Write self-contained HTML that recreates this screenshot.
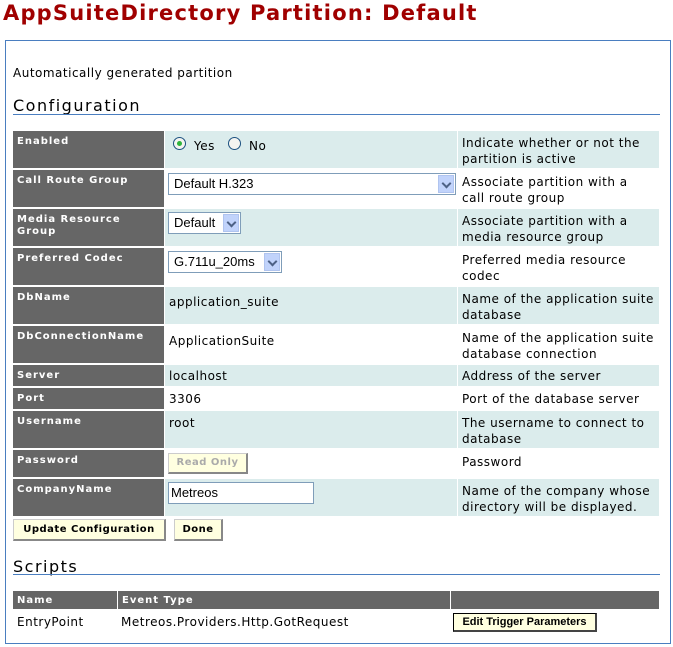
<!DOCTYPE html>
<html><head><meta charset="utf-8"><style>
*{margin:0;padding:0;box-sizing:border-box}
body{width:673px;height:647px;background:#fff;position:relative;overflow:hidden;font-family:"DejaVu Sans",Verdana,sans-serif;font-size:12px;letter-spacing:0.5px;color:#000}
.a{position:absolute}
h1{position:absolute;left:3px;top:1px;font-size:21px;font-weight:bold;color:#a00000;letter-spacing:1.2px;font-family:"DejaVu Sans",sans-serif;white-space:nowrap}
.box{left:5px;top:40px;width:666px;height:604px;border:1px solid #4a7ec0}
.h2{font-size:16px;letter-spacing:1.5px;left:13px}
.ul{left:13px;width:647px;height:1px;background:#4a7ec0}
.lab{left:13px;width:151px;background:#666;color:#fff;font-weight:bold;font-size:10px;letter-spacing:1px;padding:5px 4px;line-height:12px}
.val{left:165px;width:292px;padding:7px 4px;line-height:16px}
.desc{left:458px;width:201px;padding:4px 4px;line-height:16px}
.t{background:#dbecec}
.sel{position:absolute;border:1px solid #7f9db9;background:#fff;font-family:"Liberation Sans",Arial,sans-serif;font-size:13px;letter-spacing:0;padding:2px 5px;line-height:15px}
.arr{position:absolute;right:1px;top:1px;width:16px;height:18px;background:#c1d3fb;border:1px solid #b0c4ef}
.arr:after{content:"";position:absolute;left:4px;top:4px;width:5px;height:5px;border-right:2px solid #4d6185;border-bottom:2px solid #4d6185;transform:rotate(45deg)}
.btn{position:absolute;background:#ffffe0;border:1px solid #ccc;border-right:2px solid #888;border-bottom:2px solid #888;font-weight:bold;font-size:10px;letter-spacing:.5px;text-align:center;line-height:18px}
.sh{background:#666;color:#fff;font-weight:bold;font-size:10px;letter-spacing:1px;padding:4px 4px;line-height:12px;top:591px;height:18px}
</style></head><body>
<h1>AppSuiteDirectory Partition: Default</h1>
<div class="a box"></div>
<div class="a" style="left:13px;top:66px">Automatically generated partition</div>
<div class="a h2" style="top:96px">Configuration</div>
<div class="a ul" style="top:114px"></div>

<div class="a lab" style="top:131px;height:37px">Enabled</div>
<div class="a val t" style="top:131px;height:37px"></div>
<div class="a desc t" style="top:131px;height:37px">Indicate whether or not the partition is active</div>
<div class="a" style="left:173px;top:137px;width:13px;height:13px;border-radius:50%;border:1px solid #1c5180;background:#f4f4f0"><div style="position:absolute;left:3px;top:3px;width:5px;height:5px;border-radius:50%;background:#2fb43c"></div></div>
<div class="a" style="left:194px;top:139px">Yes</div>
<div class="a" style="left:228px;top:137px;width:13px;height:13px;border-radius:50%;border:1px solid #1c5180;background:#f4f4f0"></div>
<div class="a" style="left:249px;top:139px">No</div>

<div class="a lab" style="top:170px;height:37px">Call Route Group</div>
<div class="a val" style="top:170px;height:37px"></div>
<div class="a desc" style="top:170px;height:37px">Associate partition with a<br>call route group</div>
<div class="sel" style="left:168px;top:173px;width:288px;height:22px">Default H.323<div class="arr"></div></div>

<div class="a lab t2" style="top:209px;height:37px">Media Resource Group</div>
<div class="a val t" style="top:209px;height:37px"></div>
<div class="a desc t" style="top:209px;height:37px">Associate partition with a media resource group</div>
<div class="sel" style="left:168px;top:212px;width:73px;height:22px">Default<div class="arr"></div></div>

<div class="a lab" style="top:248px;height:37px">Preferred Codec</div>
<div class="a desc" style="top:248px;height:37px">Preferred media resource codec</div>
<div class="sel" style="left:168px;top:251px;width:114px;height:22px">G.711u_20ms<div class="arr"></div></div>

<div class="a lab" style="top:287px;height:37px">DbName</div>
<div class="a val t" style="top:287px;height:37px">application_suite</div>
<div class="a desc t" style="top:287px;height:37px">Name of the application suite database</div>

<div class="a lab" style="top:326px;height:37px">DbConnectionName</div>
<div class="a val" style="top:326px;height:37px">ApplicationSuite</div>
<div class="a desc" style="top:326px;height:37px">Name of the application suite database connection</div>

<div class="a lab" style="top:365px;height:21px">Server</div>
<div class="a val t" style="top:365px;height:21px;padding-top:3px">localhost</div>
<div class="a desc t" style="top:365px;height:21px;padding-top:3px">Address of the server</div>

<div class="a lab" style="top:388px;height:21px">Port</div>
<div class="a val" style="top:388px;height:21px;padding-top:3px">3306</div>
<div class="a desc" style="top:388px;height:21px;padding-top:3px">Port of the database server</div>

<div class="a lab" style="top:411px;height:37px">Username</div>
<div class="a val t" style="top:411px;height:37px;padding-top:4px">root</div>
<div class="a desc t" style="top:411px;height:37px">The username to connect to database</div>

<div class="a lab" style="top:450px;height:27px">Password</div>
<div class="a desc" style="top:450px;height:27px">Password</div>
<div class="btn" style="left:168px;top:453px;width:80px;height:21px;color:#aaa">Read Only</div>

<div class="a lab" style="top:479px;height:37px">CompanyName</div>
<div class="a val t" style="top:479px;height:37px"></div>
<div class="a desc t" style="top:479px;height:37px">Name of the company whose directory will be displayed.</div>
<div class="sel" style="left:168px;top:482px;width:146px;height:22px;padding-left:2px">Metreos</div>

<div class="btn" style="left:13px;top:519px;width:153px;height:22px;line-height:19px">Update Configuration</div>
<div class="btn" style="left:174px;top:519px;width:49px;height:22px;line-height:19px">Done</div>

<div class="a h2" style="top:557px">Scripts</div>
<div class="a ul" style="top:574px"></div>

<div class="a sh" style="left:13px;width:104px">Name</div>
<div class="a sh" style="left:118px;width:332px">Event Type</div>
<div class="a sh" style="left:451px;width:208px"></div>
<div class="a" style="left:17px;top:615px">EntryPoint</div>
<div class="a" style="left:121px;top:615px">Metreos.Providers.Http.GotRequest</div>
<div class="btn" style="left:453px;top:613px;width:144px;height:19px;line-height:16px;color:#000;border:1px solid #000;border-right:2px solid #444;border-bottom:2px solid #444;font-family:'Liberation Sans',Arial,sans-serif;font-size:11px;letter-spacing:0">Edit Trigger Parameters</div>
</body></html>
